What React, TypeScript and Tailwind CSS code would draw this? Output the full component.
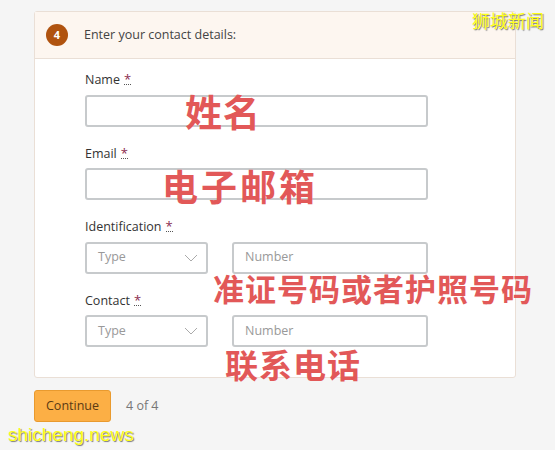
import React from "react";

const font = { fontFamily: '"Open Sans", "Noto Sans CJK SC", sans-serif' };
const cjk = { fontFamily: '"Noto Sans CJK SC", sans-serif' };

function Label({ text }: { text: string }) {
  return (
    <div className="text-[12.5px] text-[#333] leading-none mb-[8px] flex items-start gap-[4px]">
      <span>{text}</span>
      <abbr className="text-[#8b2c4f] no-underline border-b border-dotted border-[#555] leading-[10px] text-[13px]">*</abbr>
    </div>
  );
}

function TypeSelect() {
  return (
    <div className="w-[123px] h-[32px] border-2 border-[#c7cacc] rounded-[3px] flex items-center justify-between pl-[11px] pr-[8px] bg-white">
      <span className="text-[12.5px] text-[#999]">Type</span>
      <svg width="14" height="8" viewBox="0 0 14 8" fill="none">
        <path d="M1 1l6 6 6-6" stroke="#aaa" strokeWidth="1" />
      </svg>
    </div>
  );
}

function NumberBox() {
  return (
    <div className="w-[196px] h-[32px] border-2 border-[#c7cacc] rounded-[3px] flex items-center pl-[11px] bg-white">
      <span className="text-[12.5px] text-[#999]">Number</span>
    </div>
  );
}

export default function App() {
  return (
    <div className="relative w-[555px] h-[450px] bg-[#f5f5f5] overflow-hidden" style={font}>
      <div className="pt-[11px] pl-[34px] w-[516px]">
        <div className="border border-[#eadfd6] rounded-[3px] bg-white">
          <div className="h-[47px] bg-[#fdf6f0] border-b border-[#eadfd6] flex items-center pl-[11px] gap-[16px]">
            <div className="w-[22px] h-[22px] rounded-full bg-[#b0530f] flex items-center justify-center text-white text-[11px] font-bold">4</div>
            <span className="text-[12.5px] text-[#444]">Enter your contact details:</span>
          </div>
          <div className="pl-[50px] pt-[15px] pb-[30px] flex flex-col gap-[21px]">
            <div>
              <Label text="Name" />
              <div className="w-[343px] h-[32px] border-2 border-[#c7cacc] rounded-[3px] bg-white" />
            </div>
            <div>
              <Label text="Email" />
              <div className="w-[343px] h-[32px] border-2 border-[#c7cacc] rounded-[3px] bg-white" />
            </div>
            <div>
              <Label text="Identification" />
              <div className="flex gap-[24px]">
                <TypeSelect />
                <NumberBox />
              </div>
            </div>
            <div>
              <Label text="Contact" />
              <div className="flex gap-[24px]">
                <TypeSelect />
                <NumberBox />
              </div>
            </div>
          </div>
        </div>
        <div className="flex items-center gap-[15px] mt-[12px]">
          <button className="w-[77px] h-[32px] bg-[#fcaf45] border border-[#e99a2e] rounded-[3px] text-[12.5px] text-[#5b3a14]">Continue</button>
          <span className="text-[12.5px] text-[#777]">4 of 4</span>
        </div>
      </div>

      {/* annotations over the screenshot */}
      <div className="absolute left-[185px] top-[93px] text-[37px] font-bold text-[#e25858] leading-none tracking-[1px]" style={cjk}>姓名</div>
      <div className="absolute left-[162px] top-[167px] text-[36px] font-bold text-[#e25858] leading-none tracking-[3px]" style={cjk}>电子邮箱</div>
      <div className="absolute left-[213px] top-[272px] text-[31px] font-bold text-[#e25858] leading-none tracking-[1px]" style={cjk}>准证号码或者护照号码</div>
      <div className="absolute left-[225px] top-[348px] text-[33px] font-bold text-[#e25858] leading-none tracking-[1px]" style={cjk}>联系电话</div>
      <div className="absolute left-[472px] top-[11px] text-[18px] text-[#ffff1a] leading-none [text-shadow:1px_1px_1px_#777]" style={cjk}>狮城新闻</div>
      <div className="absolute left-[8px] top-[425px] text-[19px] text-[#ffff1a] leading-none [text-shadow:1px_1px_1px_#777]" style={{ fontFamily: '"Liberation Sans", sans-serif' }}>shicheng.news</div>
    </div>
  );
}
